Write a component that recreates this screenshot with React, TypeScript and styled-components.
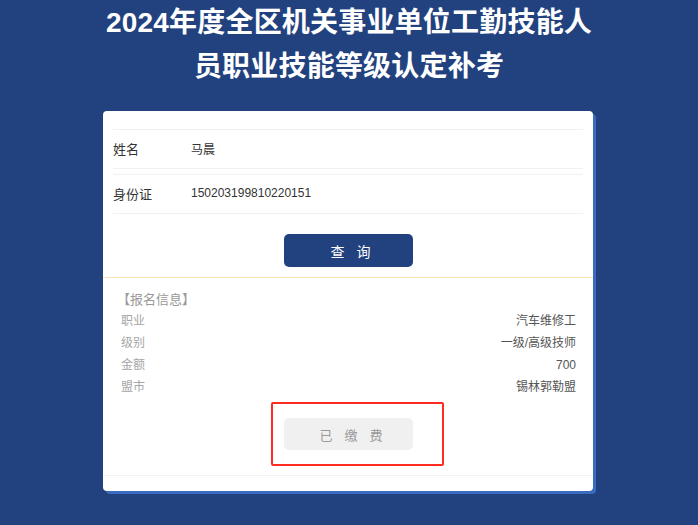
import React from "react";
import styled, { createGlobalStyle } from "styled-components";

const Global = createGlobalStyle`
  html, body {
    margin: 0;
    padding: 0;
    background: #22427f;
    min-height: 100%;
  }
  body {
    font-family: "Liberation Sans", "Noto Sans CJK SC", sans-serif;
  }
`;

const Page = styled.div`
  min-height: 100vh;
  background: #22427f;
  padding-top: 1px;
  box-sizing: border-box;
`;

const Title = styled.h1`
  margin: 0;
  color: #ffffff;
  font-size: 28px;
  font-weight: bold;
  line-height: 44px;
  letter-spacing: 0.2px;
  text-align: center;
  font-family: "Liberation Sans", "Noto Sans CJK SC", sans-serif;
`;

const Card = styled.div`
  width: 490px;
  margin: 22px 0 0 103px;
  background: #ffffff;
  border-radius: 4px;
  box-shadow: 3px 3px 0 #3a6bbf;
`;

const FormSection = styled.div`
  padding: 18px 10px 10px;
`;

const FormRow = styled.div<{ $first?: boolean }>`
  display: flex;
  align-items: center;
  height: 38px;
  border-top: 1px solid #f1f1f1;
  border-bottom: 1px solid #f1f1f1;
  margin-top: ${(p) => (p.$first ? "0" : "5px")};
  padding-bottom: 2px;
  box-sizing: content-box;
  height: 36px;
`;

const FormLabel = styled.div`
  width: 78px;
  font-size: 13px;
  color: #333;
`;

const FormValue = styled.div`
  font-size: 12px;
  color: #333;
`;

const ButtonRow = styled.div<{ $top: number }>`
  display: flex;
  justify-content: center;
  padding-top: ${(p) => p.$top}px;
`;

const ActionButton = styled.button<{ $disabled?: boolean }>`
  position: relative;
  display: flex;
  justify-content: center;
  align-items: center;
  gap: 12px;
  width: 129px;
  height: ${(p) => (p.$disabled ? "32px" : "33px")};
  padding: 0 0 0 5px;
  border: none;
  border-radius: 5px;
  background: ${(p) => (p.$disabled ? "#f0f0f0" : "#22427f")};
  color: ${(p) => (p.$disabled ? "#999" : "#fff")};
  font-size: ${(p) => (p.$disabled ? "13px" : "14px")};
  font-family: "Noto Sans CJK SC", sans-serif;
  cursor: pointer;
`;

const Annotation = styled.div`
  position: absolute;
  left: -13px;
  top: -16px;
  width: 173px;
  height: 64px;
  box-sizing: border-box;
  border: 2px solid #ff2b1f;
  border-radius: 2px;
  pointer-events: none;
`;

const CreamDivider = styled.div`
  border-top: 1px solid #fbe2b6;
`;

const GrayDivider = styled.div`
  border-top: 1px solid #f2f2f2;
`;

const InfoSection = styled.div`
  padding: 10px 17px 25px 18px;
`;

const InfoHeader = styled.div`
  font-size: 13px;
  line-height: 22px;
  color: #999;
  margin-left: -4px;
  font-family: "Noto Sans CJK SC", sans-serif;
`;

const InfoRow = styled.div`
  display: flex;
  justify-content: space-between;
  font-size: 12px;
  line-height: 22px;
`;

const InfoLabel = styled.span`
  color: #a6a6a6;
`;

const InfoValue = styled.span`
  color: #555;
`;

const Footer = styled.div`
  height: 15px;
`;

const info = [
  ["职业", "汽车维修工"],
  ["级别", "一级/高级技师"],
  ["金额", "700"],
  ["盟市", "锡林郭勒盟"],
];

export default function App() {
  return (
    <Page>
      <Global />
      <Title>
        2024年度全区机关事业单位工勤技能人
        <br />
        员职业技能等级认定补考
      </Title>
      <Card>
        <FormSection>
          <FormRow $first>
            <FormLabel>姓名</FormLabel>
            <FormValue>马晨</FormValue>
          </FormRow>
          <FormRow>
            <FormLabel>身份证</FormLabel>
            <FormValue>150203199810220151</FormValue>
          </FormRow>
          <ButtonRow $top={20}>
            <ActionButton>
              <span>查</span>
              <span>询</span>
            </ActionButton>
          </ButtonRow>
        </FormSection>
        <CreamDivider />
        <InfoSection>
          <InfoHeader>【报名信息】</InfoHeader>
          {info.map(([k, v]) => (
            <InfoRow key={k}>
              <InfoLabel>{k}</InfoLabel>
              <InfoValue>{v}</InfoValue>
            </InfoRow>
          ))}
          <ButtonRow $top={20}>
            <ActionButton $disabled>
              <span>已</span>
              <span>缴</span>
              <span>费</span>
              <Annotation />
            </ActionButton>
          </ButtonRow>
        </InfoSection>
        <GrayDivider />
        <Footer />
      </Card>
    </Page>
  );
}
